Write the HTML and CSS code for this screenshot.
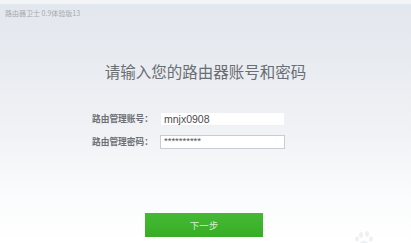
FILE: index.html
```html
<!DOCTYPE html>
<html lang="zh-CN">
<head>
<meta charset="utf-8">
<title>路由器卫士</title>
<link rel="stylesheet" href="styles.css">
</head>
<body>
<div class="page">
  <div class="topline"></div>
  <div class="titlebar">路由器卫士 0.9体验版13</div>
  <h1 class="heading">请输入您的路由器账号和密码</h1>
  <div class="form">
    <div class="row">
      <label class="label">路由管理账号：</label>
      <input class="field" type="text" value="mnjx0908">
    </div>
    <div class="row">
      <label class="label">路由管理密码：</label>
      <input class="field field-pass" type="text" value="**********">
    </div>
  </div>
  <div class="actions">
    <button class="next">下一步</button>
  </div>
  <svg class="watermark" width="60" height="14" viewBox="0 0 60 14">
    <ellipse cx="26" cy="5" rx="2" ry="3" fill="#eef0f2"/>
    <ellipse cx="32" cy="4" rx="2" ry="3" fill="#eef0f2"/>
    <ellipse cx="22" cy="9" rx="2" ry="2.5" fill="#eef0f2"/>
    <ellipse cx="36" cy="9" rx="2" ry="2.5" fill="#eef0f2"/>
    <path d="M24 14 Q29 7 34 14 Z" fill="#eef0f2"/>
  </svg>
</div>
</body>
</html>
```
FILE: styles.css
```css
html, body {
  margin: 0;
  padding: 0;
}
body {
  width: 411px;
  height: 243px;
  overflow: hidden;
  font-family: "Noto Sans CJK SC", "Liberation Sans", sans-serif;
}
.page {
  position: relative;
  width: 411px;
  height: 243px;
  display: flex;
  flex-direction: column;
  background: linear-gradient(to bottom, #e3e7ee 0px, #e8ebf0 60px, #f1f3f6 140px, #fafbfc 190px, #ffffff 243px);
}
.topline {
  height: 4px;
  background: #f3f4f6;
}
.titlebar {
  padding: 2px 0 0 5px;
  height: 16px;
  line-height: 14px;
  font-size: 7px;
  color: #a4a8ae;
}
.heading {
  margin: 39px 0 0 0;
  height: 20px;
  line-height: 20px;
  font-size: 15.5px;
  font-weight: normal;
  color: #6a6d72;
  text-align: center;
  padding-left: 0;
}
.form {
  margin-top: 31px;
  display: flex;
  flex-direction: column;
  gap: 9px;
  padding-left: 92px;
}
.row {
  display: flex;
  align-items: center;
  height: 14px;
}
.label {
  width: 68px;
  font-size: 8.7px;
  line-height: 14px;
  color: #6c6f74;
  font-weight: bold;
  white-space: nowrap;
}
.field {
  box-sizing: border-box;
  width: 125px;
  height: 14px;
  margin: 0;
  padding: 0 0 0 3px;
  border: 1px solid #eef0f3;
  background: #ffffff;
  font-family: "Liberation Sans", sans-serif;
  font-size: 10.5px;
  color: #4a4c50;
  outline: none;
}
.field-pass {
  border-color: #c9ccd1;
  font-size: 9.5px;
  color: #555;
  padding-bottom: 3px;
}
.actions {
  margin-top: 64px;
  display: flex;
  padding-left: 145px;
}
.next {
  width: 118px;
  height: 24px;
  margin: 0;
  border: none;
  background: linear-gradient(to bottom, #45b935, #37ad25);
  color: #d6f0cf;
  font-family: "Noto Sans CJK SC", sans-serif;
  font-size: 9.5px;
  padding: 0;
}
.watermark {
  position: absolute;
  left: 335px;
  top: 230px;
}
```
